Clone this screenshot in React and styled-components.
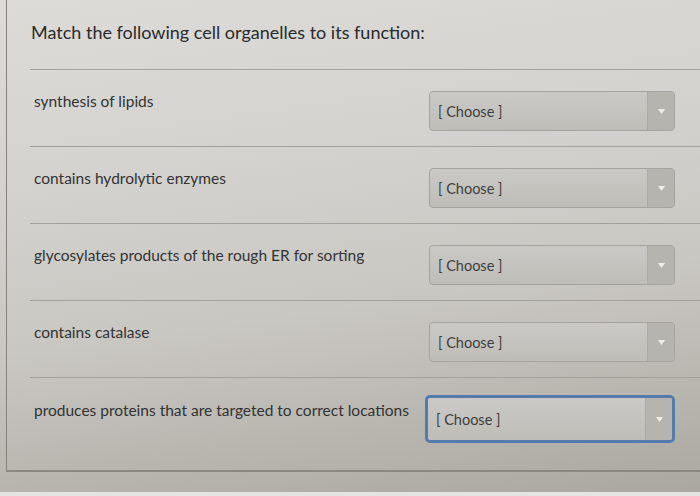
import styled, { createGlobalStyle } from 'styled-components'

const GlobalStyle = createGlobalStyle`
  html, body {
    margin: 0;
    padding: 0;
  }
  body {
    width: 700px;
    height: 496px;
    overflow: hidden;
    font-family: Lato, 'Liberation Sans', sans-serif;
    background: linear-gradient(172deg, #dcdbd7 0%, #d5d3cf 30%, #c9c7c2 60%, #b6b3ad 85%, #aaa7a0 100%);
  }
`

const Page = styled.div`
  position: relative;
  height: 496px;
  padding-left: 6px;
  box-sizing: border-box;
  overflow: hidden;
`

const Panel = styled.div`
  width: 694px;
  height: 472px;
  box-sizing: border-box;
  border-left: 1px solid #85827c;
  border-bottom: 2px solid #8b8882;
  padding-left: 23px;
`

const Header = styled.div`
  height: 70px;
  box-sizing: border-box;
  padding-top: 21px;
  border-bottom: 1px solid #a5a39e;
`

const Title = styled.h1`
  margin: 0 0 0 1px;
  font-size: 18px;
  line-height: 22px;
  font-weight: 400;
  color: #2a2a2a;
`

const Row = styled.div`
  display: grid;
  grid-template-columns: 395px 246px;
  align-items: start;
  height: 77px;
  box-sizing: border-box;
  padding: 21px 0 0 4px;
  border-bottom: ${p => (p.$last ? 'none' : '1px solid #a3a19c')};
`

const Label = styled.div`
  font-size: 15.5px;
  line-height: 20px;
  color: #333;
  white-space: nowrap;
  padding-top: ${p => (p.$last ? '1px' : '0')};
`

const Select = styled.div`
  display: flex;
  box-sizing: border-box;
  border: ${p => (p.$focused ? '3px solid #557aad' : '1px solid #a5a39e')};
  border-radius: ${p => (p.$focused ? '5px' : '4px')};
  margin-top: ${p => (p.$focused ? '-4px' : '0')};
  height: ${p => (p.$focused ? '48px' : '40px')};
  margin-left: ${p => (p.$focused ? '-4px' : '0')};
  background: linear-gradient(180deg, #cbc9c5 0%, #bfbdb8 100%);
  overflow: hidden;
`

const Value = styled.div`
  flex: 1;
  display: flex;
  align-items: center;
  padding-left: 8px;
  font-size: 14.5px;
  color: #3e3e3e;
`

const Arrow = styled.div`
  width: 26px;
  display: flex;
  align-items: center;
  justify-content: center;
  background: #b6b4af;
  border-left: 1px solid #adaba6;
  svg {
    display: block;
  }
`

const Footer = styled.div`
  position: absolute;
  left: 0;
  right: 0;
  bottom: 0;
  height: 4px;
  background: #e6e4e0;
`

const items = [
  'synthesis of lipids',
  'contains hydrolytic enzymes',
  'glycosylates products of the rough ER for sorting',
  'contains catalase',
  'produces proteins that are targeted to correct locations',
]

function App() {
  return (
    <Page>
      <GlobalStyle />
      <Panel>
        <Header>
          <Title>Match the following cell organelles to its function:</Title>
        </Header>
        {items.map((text, i) => {
          const last = i === items.length - 1
          return (
            <Row key={text} $last={last}>
              <Label $last={last}>{text}</Label>
              <Select $focused={last}>
                <Value>[ Choose ]</Value>
                <Arrow>
                  <svg width="7" height="5" viewBox="0 0 7 5">
                    <path d="M0 0 L7 0 L3.5 5 Z" fill="#eeedeb" />
                  </svg>
                </Arrow>
              </Select>
            </Row>
          )
        })}
      </Panel>
      <Footer />
    </Page>
  )
}

export default App
